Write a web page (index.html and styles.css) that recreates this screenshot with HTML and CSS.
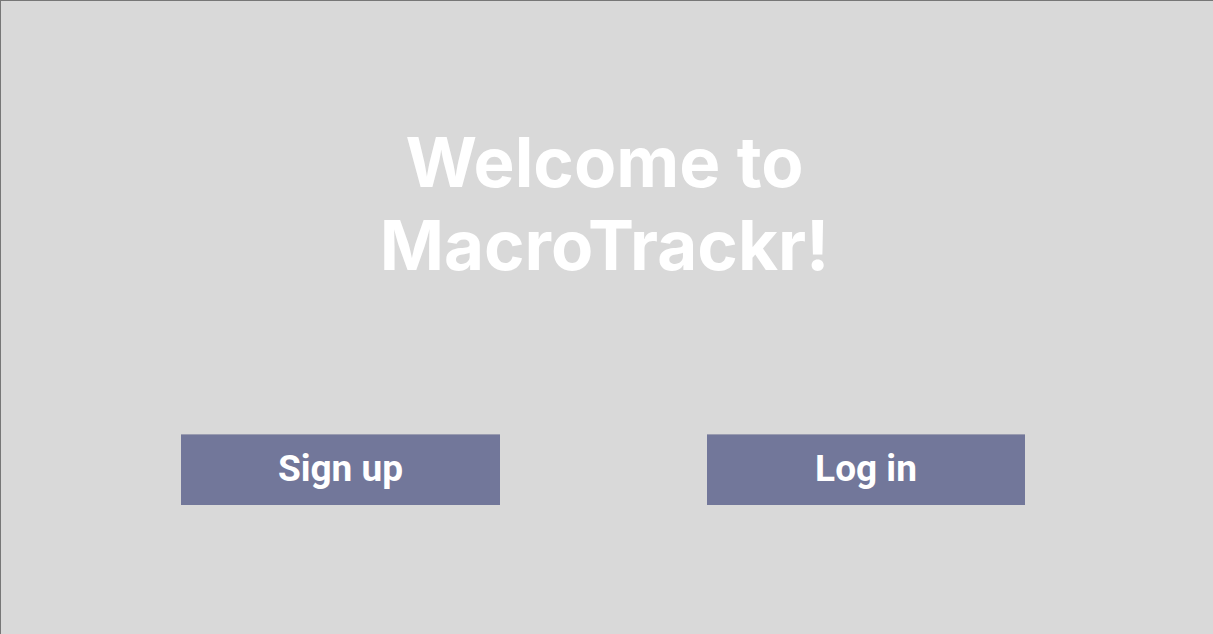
FILE: index.html
```html
<!DOCTYPE html>
<html lang="en">
<head>
<meta charset="utf-8">
<title>MacroTrackr</title>
<link rel="stylesheet" href="styles.css">
</head>
<body>
<main class="screen">
  <h1 class="title">Welcome to<br>MacroTrackr!</h1>
  <div class="actions">
    <button class="btn btn-signup">Sign up</button>
    <button class="btn btn-login">Log in</button>
  </div>
</main>
</body>
</html>
```
FILE: styles.css
```css
html, body {
  margin: 0;
  padding: 0;
}
body {
  width: 1213px;
  height: 634px;
  overflow: hidden;
  background: #d9d9d9;
  font-family: Inter, "Noto Sans", sans-serif;
}
.screen {
  box-sizing: border-box;
  height: 634px;
  border-top: 1px solid #777777;
  border-left: 1px solid #777777;
  display: flex;
  flex-direction: column;
}
.title {
  margin: 120px 0 0 0;
  padding-right: 5px;
  text-align: center;
  color: #ffffff;
  font-size: 69px;
  font-weight: 700;
  line-height: 83px;
}
.actions {
  display: flex;
  gap: 207px;
  padding-left: 180px;
  margin-top: 147px;
}
.btn {
  box-sizing: border-box;
  width: 319px;
  height: 71px;
  border: none;
  border-top: 1px solid #9a9cb0;
  background: #72779a;
  color: #ffffff;
  font-family: Roboto, Inter, sans-serif;
  font-size: 37px;
  font-weight: 700;
  padding: 0 0 4px 0;
}
.btn-login {
  width: 318px;
}
```
